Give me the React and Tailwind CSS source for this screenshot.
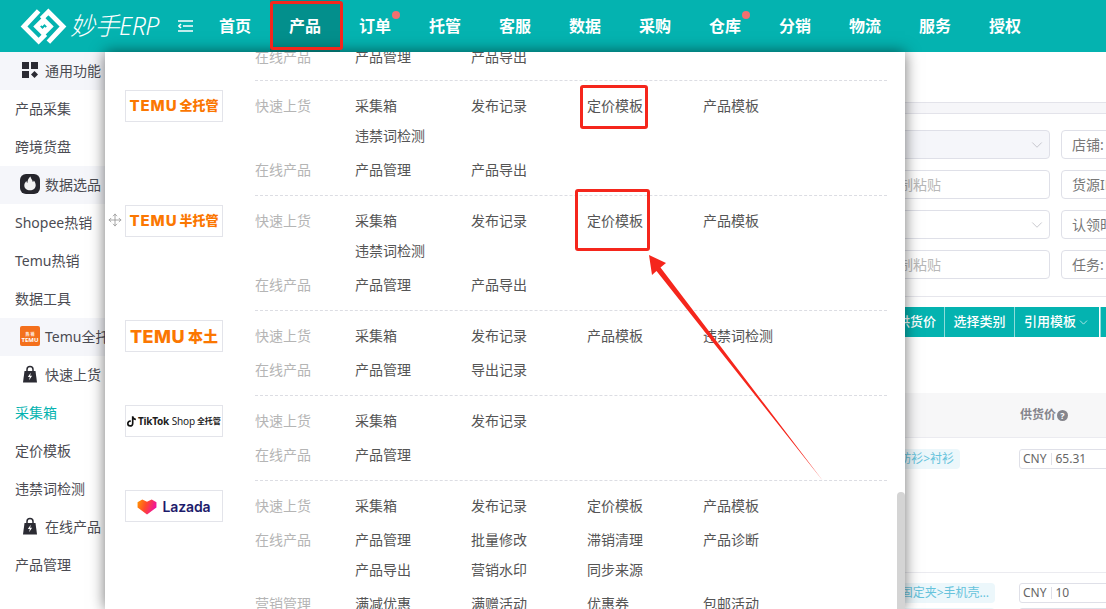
import React from "react";
import { Move, ChevronDown } from "lucide-react";

const navItems = ["首页", "产品", "订单", "托管", "客服", "数据", "采购", "仓库", "分销", "物流", "服务", "授权"];

const sideItems = [
  { label: "通用功能", icon: "grid" },
  { label: "产品采集" },
  { label: "跨境货盘" },
  { label: "数据选品", icon: "fire" },
  { label: "Shopee热销" },
  { label: "Temu热销" },
  { label: "数据工具" },
  { label: "Temu全托管", icon: "temu" },
  { label: "快速上货", icon: "bag" },
  { label: "采集箱", active: true },
  { label: "定价模板" },
  { label: "违禁词检测" },
  { label: "在线产品", icon: "bag" },
  { label: "产品管理" },
];

const menuGroups = [
  {
    logo: "full",
    sections: [
      { title: "快速上货", links: ["采集箱", "发布记录", "定价模板", "产品模板", "违禁词检测"] },
      { title: "在线产品", links: ["产品管理", "产品导出"] },
    ],
  },
  {
    logo: "semi",
    sections: [
      { title: "快速上货", links: ["采集箱", "发布记录", "定价模板", "产品模板", "违禁词检测"] },
      { title: "在线产品", links: ["产品管理", "产品导出"] },
    ],
  },
  {
    logo: "local",
    sections: [
      { title: "快速上货", links: ["采集箱", "发布记录", "产品模板", "违禁词检测"] },
      { title: "在线产品", links: ["产品管理", "导出记录"] },
    ],
  },
  {
    logo: "tiktok",
    sections: [
      { title: "快速上货", links: ["采集箱", "发布记录"] },
      { title: "在线产品", links: ["产品管理"] },
    ],
  },
  {
    logo: "lazada",
    sections: [
      { title: "快速上货", links: ["采集箱", "发布记录", "定价模板", "产品模板"] },
      { title: "在线产品", links: ["产品管理", "批量修改", "滞销清理", "产品诊断", "产品导出", "营销水印", "同步来源"] },
      { title: "营销管理", links: ["满减优惠", "满赠活动", "优惠券", "包邮活动"] },
    ],
  },
];

function SideIcon({ type }) {
  if (type === "grid") {
    return (
      <svg viewBox="0 0 20 20" className="w-5 h-5 shrink-0 -mt-[2px]">
        <rect x="2" y="2" width="7" height="7" fill="#2b2b33" />
        <rect x="11" y="2" width="7" height="7" fill="#2b2b33" />
        <rect x="2" y="11" width="7" height="7" fill="#2b2b33" />
        <path d="M14.5 11l3.5 3.5-3.5 3.5-3.5-3.5z" fill="#2b2b33" />
      </svg>
    );
  }
  if (type === "fire") {
    return (
      <svg viewBox="0 0 20 20" className="w-5 h-5 shrink-0 -mt-[2px]">
        <rect width="20" height="20" rx="6" fill="#26262c" />
        <path d="M10.500 2.500c.3 2.500 2 3 2.300 5.500.6-.4.9-1 1-1.600 1.200 1.400 1.900 3 1.900 4.800 0 3-2.500 5-5.700 5s-5.700-2-5.700-4.800c0-2 1-3.300 2.100-4.500.1 1 .4 1.600 1 2.100.2-2.700 1-4.900 3.100-6.500z" fill="#f2f2f2" />
      </svg>
    );
  }
  if (type === "temu") {
    return (
      <div className="w-5 h-5 shrink-0 -mt-[2px] rounded-[2px] bg-[#f4701c] flex flex-col items-center justify-end pb-[2px] overflow-hidden">
        <div className="text-[4px] leading-[5px] text-white font-bold">热 销</div>
        <div className="text-[6px] leading-[7px] text-white font-bold">TEMU</div>
      </div>
    );
  }
  return (
    <svg viewBox="0 0 20 20" className="w-5 h-5 shrink-0 -mt-[2px]">
      <path d="M7 8V5.500a3 3 0 0 1 6 0V8" fill="none" stroke="#2b2b33" strokeWidth="1.500" />
      <path d="M4.500 7h11l1.500 11.500H3z" fill="#2b2b33" />
      <path d="M10.800 8.800L7.800 13h2l-.7 3.200 3-4.400h-2z" fill="#fff" />
    </svg>
  );
}

function Sidebar() {
  return (
    <aside className="w-[130px] shrink-0">
      {sideItems.map((item) => (
        <div
          key={item.label}
          className={`h-[38px] flex items-center whitespace-nowrap overflow-hidden text-[14px] ${
            item.icon ? "pl-[20px] gap-[5px]" : "pl-[15px]"
          } ${item.icon && item.label !== "快速上货" && item.label !== "在线产品" ? "bg-[#f5f6fa]" : ""} ${
            item.active ? "text-[#04b3b0]" : "text-[#4b4b52]"
          }`}
        >
          {item.icon && <SideIcon type={item.icon} />}
          <span className="-mt-px">{item.label}</span>
        </div>
      ))}
    </aside>
  );
}

function BrandLogo({ type }) {
  let inner;
  if (type === "lazada") {
    inner = (
      <>
        <svg viewBox="0 0 20 18" className="w-[20px] h-[17px] shrink-0">
          <defs>
            <linearGradient id="lazadaHeart" x1="0" y1="0" x2="1" y2="0.300">
              <stop offset="0" stopColor="#ff9a00" />
              <stop offset="0.500" stopColor="#ff4a2a" />
              <stop offset="1" stopColor="#f0149c" />
            </linearGradient>
          </defs>
          <path d="M0 4.500L5 1.500 10 4l5-2.500 5 3V10l-10 7.500L0 10z" fill="url(#lazadaHeart)" />
        </svg>
        <span className="ml-[5px] font-['Inter',sans-serif] text-[14px] font-semibold tracking-[-0.1px] text-[#1d1b6b]">Lazada</span>
      </>
    );
  } else if (type === "tiktok") {
    inner = (
      <div className="flex items-center whitespace-nowrap text-[#1c1c1c]">
        <svg viewBox="0 0 12 14" className="w-[9px] h-[11px] shrink-0 mr-[2px]">
          <path d="M6.500 0h2.200c.2 1.700 1.300 2.900 3.100 3.100v2.200c-1.200 0-2.200-.4-3.100-1v5.200c0 2.700-2.100 4.500-4.400 4.500A4.300 4.300 0 0 1 0 9.700c0-2.700 2.300-4.700 5-4.300v2.300c-1.500-.4-2.800.6-2.800 2 0 1.200 1 2.100 2.100 2.100 1.200 0 2.200-.9 2.200-2.300z" fill="#111" />
        </svg>
        <span className="text-[10px] font-bold tracking-[-0.3px]">TikTok</span>
        <span className="ml-[3px] text-[10px] tracking-[-0.2px]">Shop</span>
        <span className="ml-[2px] text-[8px] font-bold">全托管</span>
      </div>
    );
  } else {
    const suffix = { full: "全托管", semi: "半托管", local: "本土" }[type];
    inner = (
      <div className="flex items-center whitespace-nowrap text-[#fb7701] font-extrabold">
        <span className={`font-['Inter',sans-serif] ${type === "local" ? "text-[18px] tracking-[0.5px]" : "text-[15px] tracking-[0.9px]"}`}>TEMU</span>
        <span className={type === "local" ? "ml-[3px] text-[15px]" : "ml-[2px] text-[13px]"}>{suffix}</span>
      </div>
    );
  }
  return (
    <div className="w-[98px] h-[32px] shrink-0 mt-[10px] border border-[#e3e4ea] flex items-center justify-center overflow-hidden bg-white">
      {inner}
    </div>
  );
}

function MenuSection({ section }) {
  return (
    <div className="flex leading-[30px] text-[14px]">
      <div className="w-[100px] h-[30px] shrink-0 text-[#b5b5b5]">{section.title}</div>
      <div className="grid grid-cols-[116px_116px_116px_116px] flex-1 text-[#555]">
        {section.links.map((link) => (
          <div key={link} className="h-[30px] whitespace-nowrap">{link}</div>
        ))}
      </div>
    </div>
  );
}

function MegaMenu() {
  return (
    <div className="absolute left-[105px] top-[52px] bottom-0 w-[800px] bg-white shadow-[0_0_14px_rgba(0,0,0,0.55)] overflow-hidden pl-[20px] pr-[18px] z-10">
      {/* list is scrolled a bit, first row is cut by the header */}
      <div className="-mt-[10px] pb-[8px] pl-[130px]">
        <MenuSection section={{ title: "在线产品", links: ["产品管理", "产品导出"] }} />
      </div>
      {menuGroups.map((group) => (
        <div key={group.logo} className="relative flex gap-[32px]">
          <BrandLogo type={group.logo} />
          {group.logo === "semi" && (
            <Move size={14} strokeWidth={1.300} className="absolute left-[-17px] top-[18px] text-[#8a8a8a]" />
          )}
          <div className="flex-1 border-t border-dashed border-[#dcdde3] pt-[10px] pb-[10px] flex flex-col gap-[4px]">
            {group.sections.map((section) => (
              <MenuSection key={section.title} section={section} />
            ))}
          </div>
        </div>
      ))}
      <div className="absolute right-0 top-[440px] bottom-0 w-[8px] rounded-t-full bg-[#d4d4d4]" />
    </div>
  );
}

function FilterField({ wide, label, placeholder, select, muted }) {
  return (
    <div
      className={`h-[29px] shrink-0 rounded-[4px] border border-[#dfe0e8] flex items-center justify-between text-[14px] whitespace-nowrap overflow-hidden ${
        wide ? "w-[300px] pr-[3px]" : "w-[200px] pl-[10px] text-[#777]"
      } ${muted ? "bg-[#f5f6fa]" : "bg-white"}`}
    >
      {wide ? <span className="pl-[36px] text-[#b8b8b8]">{placeholder}</span> : <span>{label}</span>}
      {select && <ChevronDown size={18} strokeWidth={1} className="text-[#b5b5bd]" />}
    </div>
  );
}

function PriceInput({ value, gap }) {
  return (
    <div className={`${gap} w-[120px] h-[20px] shrink-0 rounded-[3px] border border-[#dfe0e8] flex items-center text-[12px] text-[#666] bg-white`}>
      <span className="pl-[3px] pr-[4px] border-r border-[#dfe0e8] leading-[12px]">CNY</span>
      <span className="pl-[4px]">{value}</span>
    </div>
  );
}

function CategoryChip({ width, text }) {
  return (
    <div className={`${width} shrink-0 flex justify-end`}>
      <div className="h-[20px] px-[6px] rounded-[4px] bg-[#ecf7fb] text-[12px] leading-[20px] text-[#66c3dc] whitespace-nowrap">{text}</div>
    </div>
  );
}

function MainContent() {
  return (
    <main className="flex-1 min-w-0 overflow-hidden">
      <div className="h-[50px]" />
      <div className="h-[12px] bg-[#f6f6f9] border-y border-[#e3e3ea]" />
      <div className="pt-[16px] pl-[620px] flex flex-col gap-[11px]">
        <div className="flex gap-[11px]">
          <FilterField wide select muted />
          <FilterField label="店铺:" />
        </div>
        <div className="flex gap-[11px]">
          <FilterField wide placeholder="换行或逗号分隔复制粘贴" />
          <FilterField label="货源ID:" />
        </div>
        <div className="flex gap-[11px]">
          <FilterField wide select />
          <FilterField label="认领时间:" />
        </div>
        <div className="flex gap-[11px]">
          <FilterField wide placeholder="换行或逗号分隔复制粘贴" />
          <FilterField label="任务:" />
        </div>
      </div>
      <div className="mt-[17px] h-px bg-[#e6e6ec]" />
      <div className="mt-[10px] pl-[620px] flex h-[30px] text-[13px] font-medium text-white">
        <div className="w-[194px] shrink-0 bg-[#04b3b0] flex items-center justify-end pr-[8px] whitespace-nowrap">批量修改供货价</div>
        <div className="w-[70px] shrink-0 bg-[#04b3b0] border-l border-[#8fdcda] flex items-center justify-center whitespace-nowrap">选择类别</div>
        <div className="w-[85px] shrink-0 bg-[#04b3b0] border-l border-[#8fdcda] flex items-center justify-center gap-[1px] whitespace-nowrap">
          引用模板
          <ChevronDown size={13} strokeWidth={1.200} />
        </div>
        <div className="w-[100px] shrink-0 ml-px bg-[#04b3b0] border-l border-[#8fdcda]" />
      </div>
      <div className="mt-[56px] h-[45px] bg-[#f7f7f8] border-b border-[#ebebf0] pl-[890px] flex items-center text-[12px] font-bold text-[#85858c] whitespace-nowrap">
        <span>供货价</span>
        <span className="ml-[1px] w-[11px] h-[11px] rounded-full bg-[#85858c] text-white text-[9px] leading-[11px] text-center">?</span>
      </div>
      <div className="h-[135px] border-b border-[#ebebf0] pt-[11px] flex">
        <CategoryChip width="w-[830px]" text="女装>上衣>纺衫>衬衫" />
        <PriceInput value="65.31" gap="ml-[59px]" />
      </div>
      <div className="pt-[10px] flex">
        <CategoryChip width="w-[865px]" text="手机固定夹>手机壳…" />
        <PriceInput value="10" gap="ml-[24px]" />
      </div>
      <div className="pt-[5px] flex">
        <CategoryChip width="w-[865px]" text="手机固定夹>手机壳…" />
        <PriceInput value="10" gap="ml-[24px]" />
      </div>
    </main>
  );
}

export default function App() {
  return (
    <div className="relative w-full h-[609px] overflow-hidden bg-white font-['Noto_Sans','Noto_Sans_CJK_SC',sans-serif]">
      <header className="h-[52px] bg-[#04b3b0] flex items-center text-white">
        <div className="w-[178px] pl-[20px] flex items-center shrink-0">
          <svg viewBox="0 0 48 40" className="w-[47px] h-[39px] shrink-0" fill="none" stroke="#fff" strokeWidth="5">
            <path d="M19 4L4 20l15 15 7-7" />
            <path d="M29 36l15-16L29 5l-7 7" />
            <path d="M25 12l-8 8 6 6 4-4" />
            <path d="M23 28l8-8-6-6-4 4" />
          </svg>
          <span className="ml-[3px] text-[25px] italic font-light tracking-[-0.5px] whitespace-nowrap">妙手ERP</span>
        </div>
        <svg viewBox="0 0 15 12" className="w-[15px] h-[12px] shrink-0" fill="none" stroke="#fff" strokeWidth="1.600">
          <path d="M0 1h15M5 6h10M0 11h15M3 4L1 6l2 2" />
        </svg>
        <nav className="ml-[7px] flex">
          {navItems.map((item) => (
            <div
              key={item}
              className={`relative w-[70px] h-[52px] flex items-center justify-center text-[16px] font-bold ${
                item === "产品" ? "bg-[#038f8c]" : ""
              }`}
            >
              {item}
              {(item === "订单" || item === "仓库") && (
                <span className="absolute left-[52px] top-[11px] w-[8px] h-[8px] rounded-full bg-[#f37070]" />
              )}
            </div>
          ))}
        </nav>
      </header>
      <div className="flex">
        <Sidebar />
        <MainContent />
      </div>
      <MegaMenu />

      {/* red annotations drawn on top of the screenshot */}
      <div className="absolute left-[270px] top-px w-[73px] h-[49px] border-[3px] border-[#f5261c] rounded-[3px] z-20" />
      <div className="absolute left-[580px] top-[85px] w-[68px] h-[44px] border-[3px] border-[#f5261c] rounded-[3px] z-20" />
      <div className="absolute left-[575px] top-[189px] w-[75px] h-[62px] border-[3px] border-[#f5261c] rounded-[3px] z-20" />
      <svg className="absolute left-0 top-0 z-20" width="1106" height="609">
        <path d="M649 255L666 263 660.500 267.500 823 481 656.500 271 652 275z" fill="#f5261c" />
      </svg>
    </div>
  );
}
